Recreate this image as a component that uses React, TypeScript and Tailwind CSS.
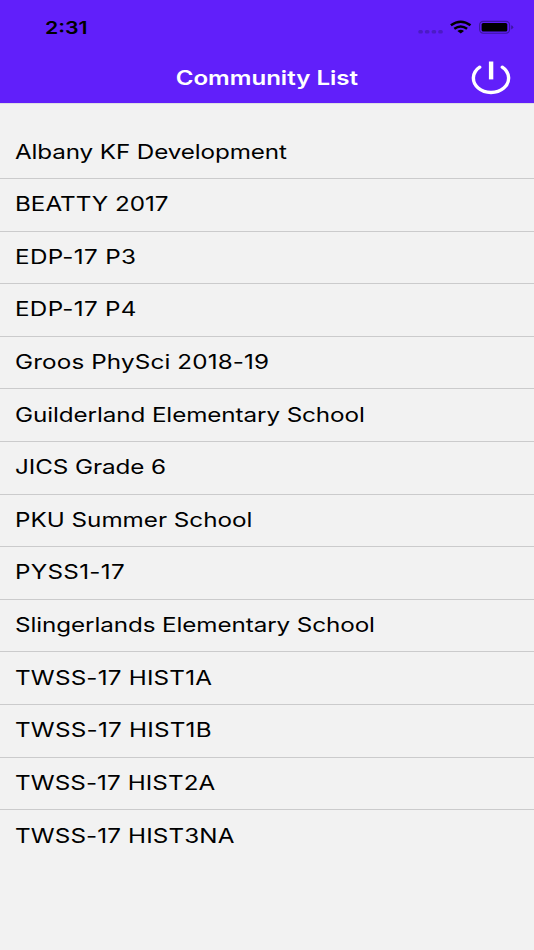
const communities: { name: string; tracking: string }[] = [
  { name: 'Albany KF Development', tracking: 'tracking-[-0.09px]' },
  { name: 'BEATTY 2017', tracking: 'tracking-normal' },
  { name: 'EDP-17 P3', tracking: 'tracking-[0.27px]' },
  { name: 'EDP-17 P4', tracking: 'tracking-[0.25px]' },
  { name: 'Groos PhySci 2018-19', tracking: 'tracking-[0.12px]' },
  { name: 'Guilderland Elementary School', tracking: 'tracking-[-0.07px]' },
  { name: 'JICS Grade 6', tracking: 'tracking-[-0.07px]' },
  { name: 'PKU Summer School', tracking: 'tracking-normal' },
  { name: 'PYSS1-17', tracking: 'tracking-[0.25px]' },
  { name: 'Slingerlands Elementary School', tracking: 'tracking-[-0.07px]' },
  { name: 'TWSS-17 HIST1A', tracking: 'tracking-[0.17px]' },
  { name: 'TWSS-17 HIST1B', tracking: 'tracking-[0.2px]' },
  { name: 'TWSS-17 HIST2A', tracking: 'tracking-[0.07px]' },
  { name: 'TWSS-17 HIST3NA', tracking: 'tracking-[0.11px]' },
];

function StatusIcons() {
  return (
    <svg width="98" height="18" viewBox="416 18 98 18" className="block" aria-label="Signal, Wi-Fi and battery">
      <g fill="#4b1bc5">
        <rect x="418.3" y="30" width="4.6" height="3.6" rx="1.6" />
        <rect x="424.9" y="30" width="4.6" height="3.6" rx="1.6" />
        <rect x="431.6" y="30" width="4.6" height="3.6" rx="1.6" />
        <rect x="438.2" y="30" width="4.6" height="3.6" rx="1.6" />
      </g>
      <g fill="none" stroke="#000" strokeWidth="2.5">
        <path d="M450.9 25.3Q460.7 18.1 470.5 25.3" />
        <path d="M454.3 28.8Q460.7 24.2 467.1 28.8" />
      </g>
      <path d="M457.4 31Q460.7 28.7 464 31L460.7 33.5Z" />
      <rect x="479.6" y="21.4" width="30" height="11.8" rx="3.6" fill="none" stroke="#3d16a0" strokeWidth="1.1" />
      <rect x="481.6" y="23" width="25.7" height="8.5" rx="1.6" />
      <path d="M511.2 25.2Q513.2 25.8 513.2 27.3T511.2 29.4Z" fill="#3d16a0" />
    </svg>
  );
}

export default function App() {
  return (
    <div className="h-[950px] w-[534px] overflow-hidden bg-[#f2f2f2] font-['Inter',sans-serif] text-black">
      <header className="h-[103px] bg-[#611ffa]">
        <div className="flex h-[52px] items-start justify-between pl-[44.7px] pr-[20px] pt-[18px]">
          <time className="block origin-left translate-y-[0.6px] scale-x-[1.217] text-[17.5px] font-semibold leading-[18px]">2:31</time>
          <StatusIcons />
        </div>
        <div className="grid h-[51px] grid-cols-[1fr_auto_1fr] items-center">
          <span />
          <h1 className="-translate-x-[0.5px] scale-x-[1.21] whitespace-nowrap text-[19.9px] font-semibold leading-6 text-white">Community List</h1>
          <button aria-label="Log out" className="mr-[22px] justify-self-end">
            <svg width="42" height="36" viewBox="470 60 42 36" fill="none" stroke="#fff" className="block">
              <path d="M479.7 67.2A17.6 14.3 0 1 0 502.3 67.2" strokeWidth="3.4" strokeLinecap="round" />
              <path d="M491.1 61.5V79.4" strokeWidth="4.4" />
            </svg>
          </button>
        </div>
      </header>
      <ul className="border-t border-[#dddde4] pt-[22.4px]">
        {communities.map(({ name, tracking }) => (
          <li key={name} className="flex h-[52.62px] items-center border-b border-[#cbcbcc] pb-[1.4px] pl-[14.7px] last:border-b-0">
            <span className={`block origin-left scale-x-[1.217] whitespace-nowrap text-[19.9px] leading-6 ${tracking}`}>{name}</span>
          </li>
        ))}
      </ul>
    </div>
  );
}
